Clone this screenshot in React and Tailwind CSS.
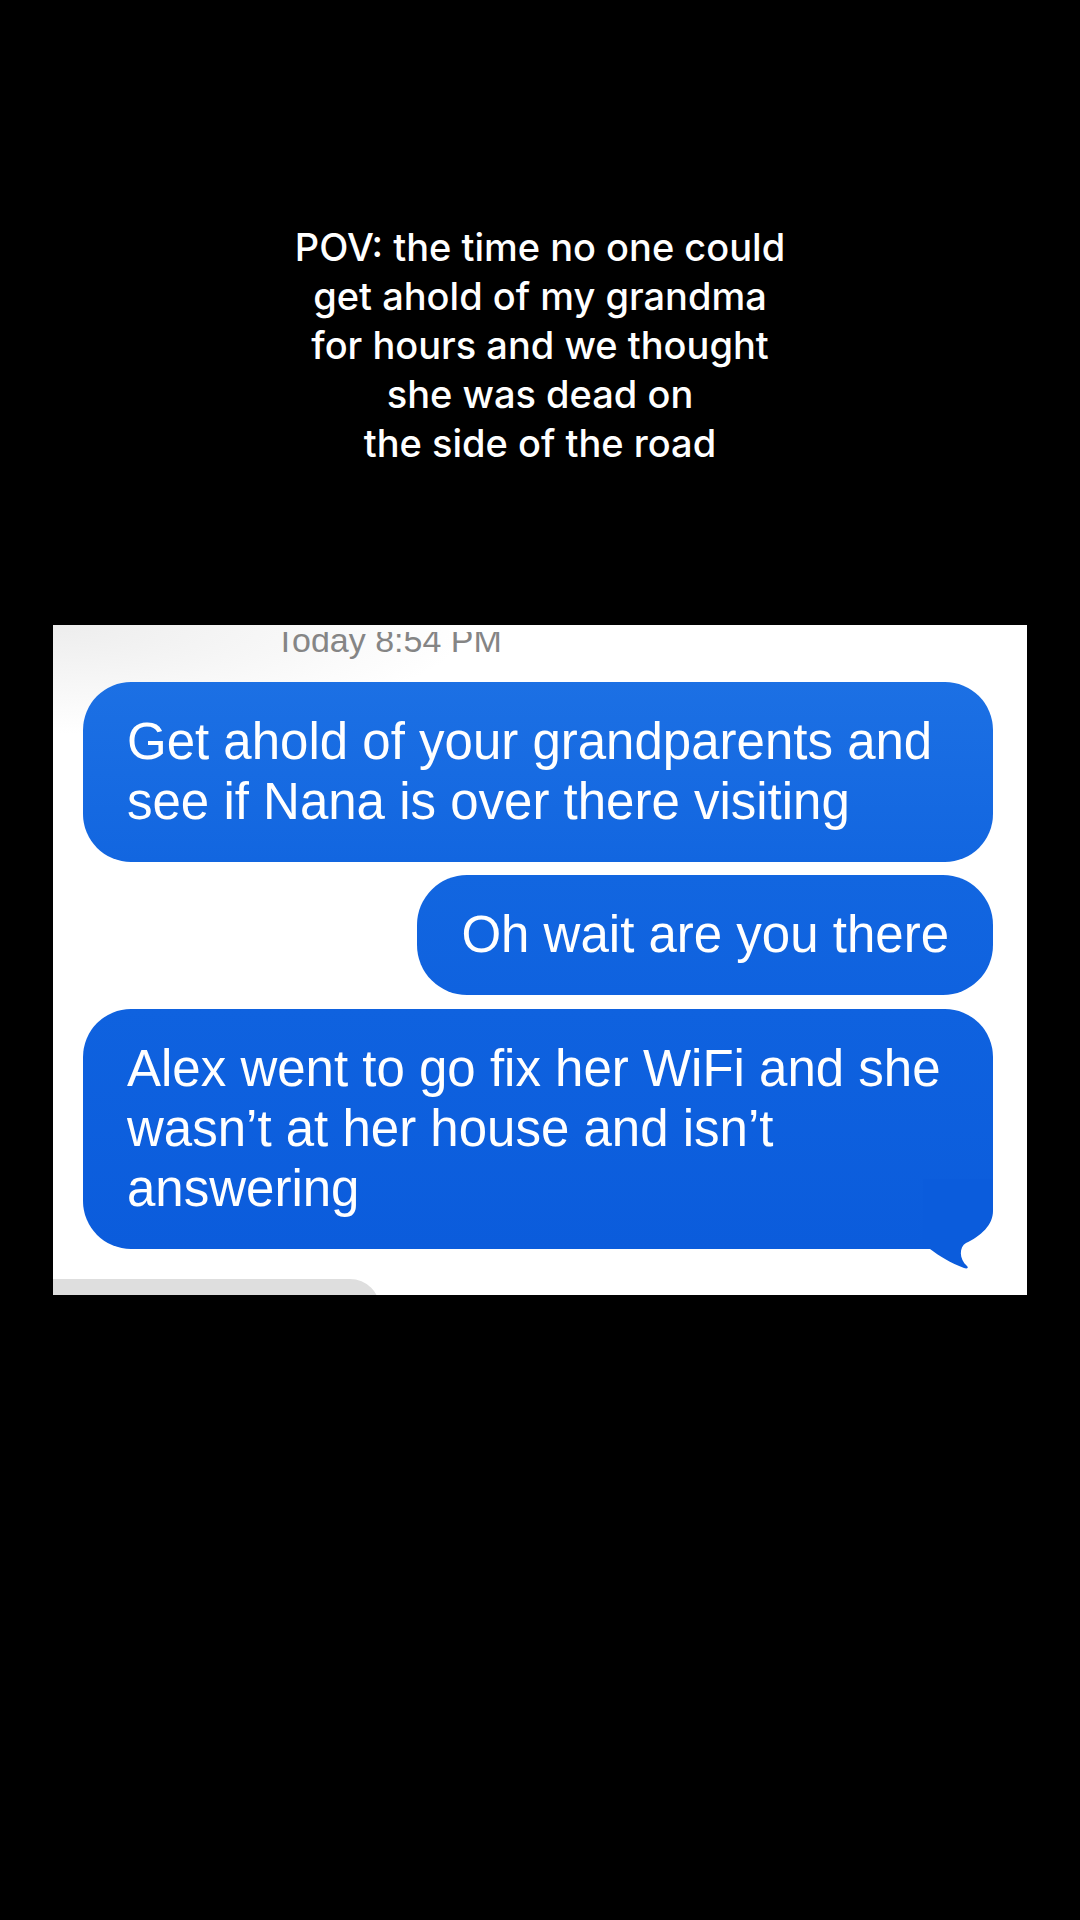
export default function App() {
  const bubbleText =
    "font-['Liberation_Sans',Arial,sans-serif] text-[51px] leading-[60px] text-white";
  return (
    <div className="w-[1080px] h-[1920px] bg-black flex flex-col">
      <div className="shrink-0 pt-[223px] text-center text-white text-[38px] leading-[49px] font-medium font-['Inter',sans-serif]">
        <p>POV: the time no one could</p>
        <p>get ahold of my grandma</p>
        <p>for hours and we thought</p>
        <p>she was dead on</p>
        <p>the side of the road</p>
      </div>

      <div className="relative shrink-0 ml-[53px] mt-[157px] w-[974px] h-[670px] bg-white overflow-hidden flex flex-col items-end pl-[30px] pr-[34px] pt-[7px]">
        <div className="absolute left-0 top-0 w-[420px] h-[110px] bg-[radial-gradient(ellipse_at_top_left,#ededed,rgba(255,255,255,0)_70%)]" />

        <div className="relative shrink-0 self-stretch h-[30px] overflow-hidden pl-[192px]">
          <div className="-mt-[9px] font-['Liberation_Sans',Arial,sans-serif] text-[34px] leading-[34px] text-[#858585] whitespace-nowrap">
            Today 8:54 PM
          </div>
        </div>

        <div
          className={`relative shrink-0 mt-[20px] w-[910px] rounded-[48px] bg-gradient-to-b from-[#1c70e4] to-[#1266e0] pl-[44px] pr-[44px] py-[30px] ${bubbleText}`}
        >
          Get ahold of your grandparents and see if Nana is over there visiting
        </div>

        <div
          className={`relative shrink-0 mt-[13px] rounded-[50px] bg-gradient-to-b from-[#1266e0] to-[#0f62df] px-[44px] py-[30px] whitespace-nowrap ${bubbleText}`}
        >
          Oh wait are you there
        </div>

        <div
          className={`relative shrink-0 mt-[14px] w-[910px] rounded-[48px] rounded-br-[64px] bg-gradient-to-b from-[#0f62df] to-[#0b5cdc] pl-[44px] pr-[44px] py-[30px] ${bubbleText}`}
        >
          <span className="relative">
            Alex went to go fix her WiFi and she wasn’t at her house and isn’t answering
          </span>
          <svg
            className="absolute right-0 bottom-[-20px] w-[70px] h-[90px]"
            viewBox="0 0 70 90"
            aria-hidden="true"
          >
            <path
              d="M70 0 L70 32 C70 46 58 57 43 64 C36 68 36 80 44 87 C46 89 44 90 41 89 C28 84 16 77 7 70 L0 70 L0 0 Z"
              fill="#0b5cdc"
            />
          </svg>
        </div>

        <div className="relative shrink-0 self-start -ml-[60px] mt-[30px] w-[357px] h-[60px] rounded-[40px] bg-[#dedede]" />
      </div>
    </div>
  );
}
